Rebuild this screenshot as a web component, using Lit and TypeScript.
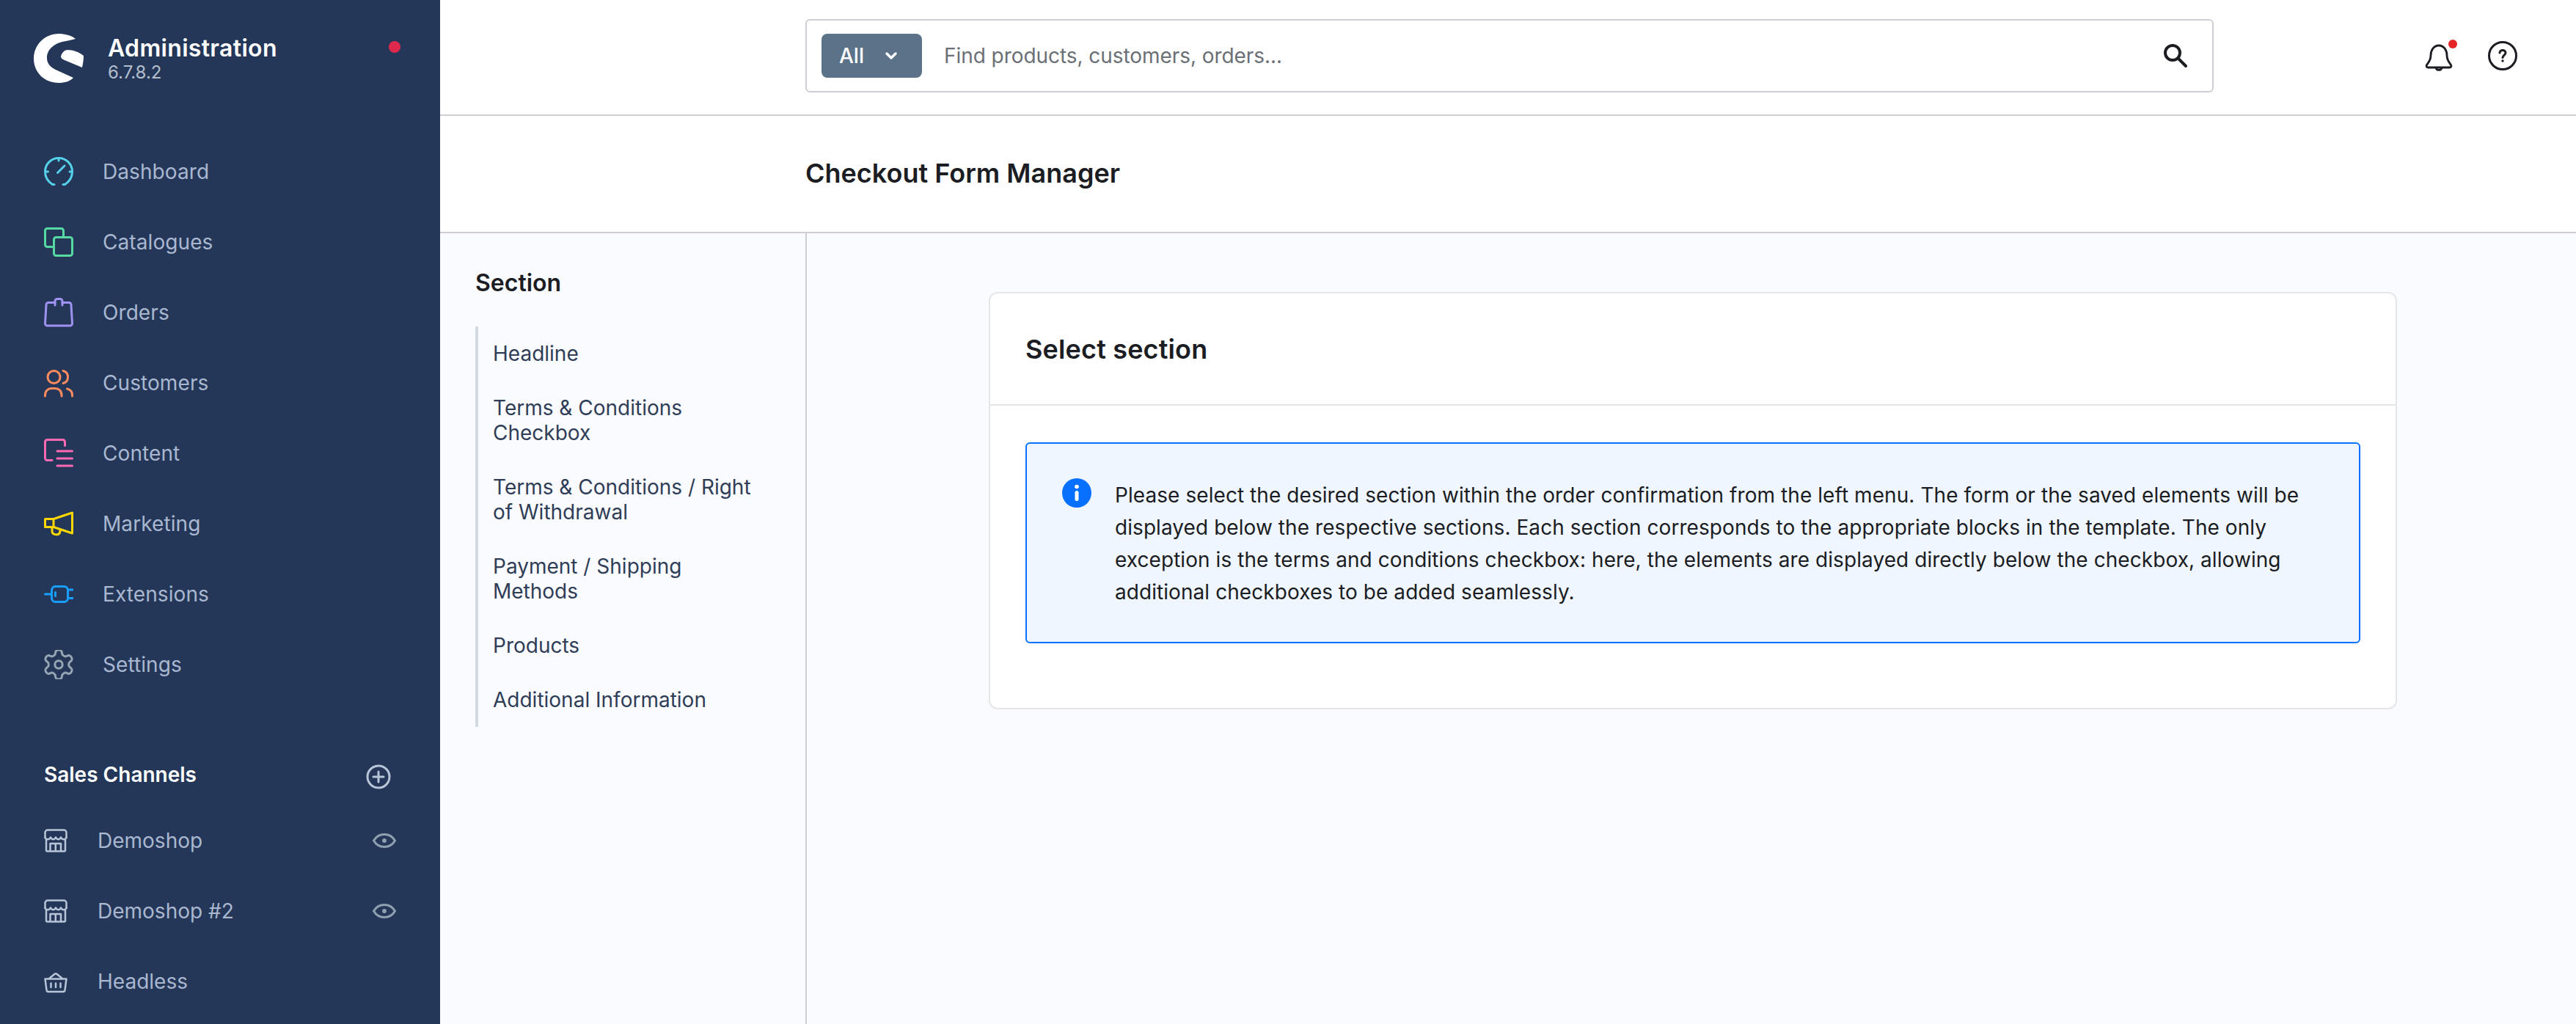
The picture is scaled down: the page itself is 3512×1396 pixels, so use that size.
import { LitElement, html, css, svg } from "lit";
import { customElement } from "lit/decorators.js";

const S = (w: number, h: number, vb: string, body: unknown, stroke: string, sw = 3) => html`<svg
  width=${w} height=${h} viewBox=${vb} fill="none" stroke=${stroke} stroke-width=${sw}
  stroke-linecap="round" stroke-linejoin="round">${body}</svg>`;

const icons = {
  dashboard: S(40, 40, "0 0 40 40", svg`<path d="M14 37.5H11.5C5.5 33.5 1.5 27.5 1.5 20A18.5 18.5 0 0 1 38.5 20C38.5 27.5 34.500 33.500 28.500 37.500H26"/><path d="M20 2V5M3 20H5.500M35 20H37M18.500 21.500L28 12"/>`, "#55d0ea"),
  catalogues: S(40, 40, "0 0 40 40", svg`<path d="M11 26.500H4.500A3 3 0 0 1 1.500 23.500V4.500A3 3 0 0 1 4.500 1.500H23.500A3 3 0 0 1 26.500 4.500V13"/><rect x="13.500" y="13.500" width="25" height="25" rx="3"/>`, "#57d9a3"),
  orders: S(40, 40, "0 0 40 40", svg`<path d="M15 6.500H6A3 3 0 0 0 3 9.500L1.500 35A3 3 0 0 0 4.500 38H35.500A3 3 0 0 0 38.500 35L37 9.500A3 3 0 0 0 34 6.500H25"/><path d="M15 10V4.500A3 3 0 0 1 18 1.500H22A3 3 0 0 1 25 4.500V10"/>`, "#a092f0"),
  customers: S(40, 40, "0 0 40 40", svg`<circle cx="13.500" cy="12" r="8.500"/><path d="M26 3.500C30 4.500 32.500 7.500 32.500 12C32.500 16.500 30 19.500 26 20.500"/><path d="M1.500 38V36.500C1.500 31 5.500 27.500 10 27.500H15C20 27.500 24 31 24 36.500V38"/><path d="M31.500 28C35.500 29 38.500 32 38.500 36.500V38"/>`, "#ff8b5e"),
  content: S(40, 40, "0 0 40 40", svg`<path d="M28.500 9.500V4.500A3 3 0 0 0 25.500 1.500H4.500A3 3 0 0 0 1.500 4.500V26.500A3 3 0 0 0 4.500 29.500H11"/><path d="M18 17H38.500M18 27H38.500M18 37H38.500"/>`, "#ff68b4"),
  marketing: S(40, 40, "0 0 40 40", svg`<path d="M13 13.500L38.500 5V33L13 24.500Z"/><path d="M13 13.500H1.500V24.500H13"/><path d="M11 25V30.500C11 34 15.500 35.500 19 34.500C21 34 22 32 22 29"/>`, "#ffd700"),
  extensions: S(40, 40, "0 0 40 40", svg`<rect x="10.500" y="9.500" width="22" height="21" rx="5"/><path d="M1.500 20H10.500M33 14H39M33 25.500H39M15.500 17.500V22.500"/>`, "#189eff"),
  settings: S(40, 40, "2 2 20 20", svg`<path d="M12.220 2h-.44a2 2 0 0 0-2 2v.18a2 2 0 0 1-1 1.730l-.43.25a2 2 0 0 1-2 0l-.15-.08a2 2 0 0 0-2.730.73l-.22.38a2 2 0 0 0 .73 2.730l.15.1a2 2 0 0 1 1 1.720v.51a2 2 0 0 1-1 1.740l-.15.09a2 2 0 0 0-.73 2.730l.22.38a2 2 0 0 0 2.730.73l.15-.08a2 2 0 0 1 2 0l.43.25a2 2 0 0 1 1 1.730V20a2 2 0 0 0 2 2h.44a2 2 0 0 0 2-2v-.18a2 2 0 0 1 1-1.730l.43-.25a2 2 0 0 1 2 0l.15.08a2 2 0 0 0 2.730-.73l.22-.39a2 2 0 0 0-.73-2.730l-.15-.08a2 2 0 0 1-1-1.740v-.5a2 2 0 0 1 1-1.740l.15-.09a2 2 0 0 0 .73-2.730l-.22-.38a2 2 0 0 0-2.730-.73l-.15.08a2 2 0 0 1-2 0l-.43-.25a2 2 0 0 1-1-1.730V4a2 2 0 0 0-2-2z"/><circle cx="12" cy="12" r="2.600"/>`, "#95a5b3", 1.500),
  store: S(32, 32, "0 0 32 32", svg`<path d="M1.500 12V5A3.500 3.500 0 0 1 5 1.500H27A3.500 3.500 0 0 1 30.500 5V12"/><path d="M1.500 12C3 15 7.500 15 9 11.500C10.500 15 14.500 15 16 11.500C17.500 15 21.500 15 23 11.500C24.500 15 29 15 30.500 12"/><path d="M3 15V29A1.500 1.500 0 0 0 4.500 30.500H27.500A1.500 1.500 0 0 0 29 29V15"/><path d="M8.500 30V20H23V30M15.800 20V30"/>`, "#b8c5d8", 2.500),
  basket: S(32, 32, "0 0 32 32", svg`<path d="M1.500 12.500H30.500L28.500 28A2.500 2.500 0 0 1 26 30H6A2.500 2.500 0 0 1 3.500 28Z"/><path d="M7 12L15 5.500H17L25 12M9.500 18.500V24M16 18.500V24M22.500 18.500V24"/>`, "#b8c5d8", 2.500),
  eye: S(32, 20, "0 0 32 20", svg`<path d="M1.500 10C5 4 10 1.500 16 1.500C22 1.500 27 4 30.500 10C27 16 22 18.500 16 18.500C10 18.500 5 16 1.500 10Z"/><circle cx="16" cy="10" r="2.200" fill="#8fa0b1" stroke-width="1.500"/>`, "#8fa0b1"),
  plus: S(34, 34, "0 0 34 34", svg`<circle cx="17" cy="17" r="15"/><path d="M17 10V24M10 17H24"/>`, "#b8c5d8"),
  search: S(34, 34, "0 0 34 34", svg`<circle cx="13" cy="13" r="10"/><path d="M20.500 20.500L31 31"/>`, "#1b1d23", 4),
  bell: S(38, 38, "0 0 38 38", svg`<path d="M8 15.500C8 8.500 12 2 19 2C26 2 30 8.500 30 15.500C30 22 33 25 35.500 28.500C36.500 30.500 35.500 32 33.500 32H4.500C2.500 32 1.500 30.500 2.500 28.500C5 25 8 22 8 15.500Z"/><path d="M15 32.500A4.200 4.200 0 0 0 23 32.500"/>`, "#1b1d23", 2.800),
  help: S(40, 40, "0 0 40 40", svg`<circle cx="20" cy="20" r="18.500"/><path d="M16 16C16 13.800 17.800 12.500 20 12.500C22.200 12.500 24 13.800 24 16C24 18.800 20.500 19.300 20 22.500" stroke-width="3"/><circle cx="20" cy="27" r="1.700" fill="#1b1d23" stroke="none"/>`, "#1b1d23", 3),
  chevron: S(18, 12, "0 0 18 12", svg`<path d="M3 3L9 9L15 3"/>`, "#ffffff", 3.500),
};

const nav: [string, unknown][] = [
  ["Dashboard", icons.dashboard], ["Catalogues", icons.catalogues], ["Orders", icons.orders],
  ["Customers", icons.customers], ["Content", icons.content], ["Marketing", icons.marketing],
  ["Extensions", icons.extensions], ["Settings", icons.settings],
];
const channels: [string, unknown, boolean][] = [
  ["Demoshop", icons.store, true], ["Demoshop #2", icons.store, true], ["Headless", icons.basket, false],
];
const sections = [
  "Headline", "Terms & Conditions Checkbox", "Terms & Conditions / Right of Withdrawal",
  "Payment / Shipping Methods", "Products", "Additional Information",
];

@customElement("app-root")
export class AppRoot extends LitElement {
  static styles = css`
    :host { display: flex; width: 100%; height: 1396px; overflow: hidden; background: #fff;
      font-family: Inter, "Liberation Sans", sans-serif; font-size: 28px; color: #1b1d23; }
    svg { display: block; flex: none; }
    .side { width: 600px; flex: none; background: #243758; color: #a9b8d0; height: 100%; overflow: hidden; }
    .brand { height: 186px; box-sizing: border-box; padding: 46px 46px 0; display: flex; align-items: flex-start; gap: 33px; }
    .brand-text { flex: 1; padding-top: 2px; }
    .brand-name { font-size: 32px; font-weight: 600; letter-spacing: 0.32px; line-height: 36px; color: #fff; }
    .brand-ver { font-size: 24px; line-height: 30px; margin-top: 0; color: #b3bfcc; }
    .dot { width: 16px; height: 16px; border-radius: 50%; background: #de294c; margin: 10px 8px 0 0; }
    .nav-item { height: 96px; display: flex; align-items: center; padding-left: 60px; gap: 40px; letter-spacing: 0.08px; }
    .sc-head { margin-top: 57px; height: 87px; box-sizing: border-box; padding: 2px 67px 0 60px; display: flex; align-items: center; justify-content: space-between;
      color: #fff; font-weight: 600; font-size: 28px; }
    .sc-head svg { margin-top: 6px; }
    .sc-item { height: 96px; display: flex; align-items: center; padding: 0 60px; gap: 41px; }
    .sc-item span { flex: 1; }
    .main { flex: 1; min-width: 0; display: flex; flex-direction: column; }
    .top { height: 158px; box-sizing: border-box; border-bottom: 2px solid #cdced6; display: flex; align-items: flex-start; padding: 26px 0 0 498px; }
    .search { width: 1920px; height: 100px; box-sizing: border-box; border: 2px solid #cdced6; border-radius: 6px; display: flex; align-items: center; padding: 0 33px 0 20px; }
    .all { width: 137px; height: 60px; box-sizing: border-box; border-radius: 8px; background: #5c7289; color: #fff; font-weight: 500; display: flex; align-items: center; padding-left: 24px; gap: 28px; }
    .ph { flex: 1; margin-left: 30px; color: #6b6f76; letter-spacing: -0.06px; }
    .actions { display: flex; align-items: flex-start; padding: 30px 0 0 0; margin-left: 288px; gap: 48px; }
    .bell { position: relative; padding-top: 4px; }
    .bell i { position: absolute; right: -6px; top: -2px; width: 12px; height: 12px; border-radius: 50%; background: #e62626; }
    .head { height: 160px; box-sizing: border-box; border-bottom: 2px solid #cdced6; padding: 0 0 2px 498px; display: flex; align-items: center; }
    .head h1 { margin: 0; font-size: 36px; font-weight: 600; color: #1b1d23; }
    .body { flex: 1; display: flex; background: #fafbfe; min-height: 0; }
    .menu { width: 500px; flex: none; box-sizing: border-box; border-right: 2px solid #cdced6; padding: 0 48px; }
    .menu h2 { margin: 48px 0 0; font-size: 32px; line-height: 40px; font-weight: 600; color: #1b1d23; }
    .rail { margin-top: 39px; border-left: 4px solid #d4dae0; padding-left: 20px; }
    .rail div { padding: 20px 0; line-height: 34px; color: #2f3d57; }
    .content { flex: 1; padding: 80px 0 0 248px; }
    .card { width: 1920px; box-sizing: border-box; background: #fff; border: 2px solid #e5e6ea; border-radius: 12px; padding-bottom: 88px; }
    .card-head { height: 153px; box-sizing: border-box; border-bottom: 2px solid #e5e6ea; padding-left: 48px; display: flex; align-items: center; }
    .card-head h3 { margin: 0; font-size: 36px; font-weight: 600; letter-spacing: 0.15px; color: #1b1d23; }
    .alert { margin: 50px 48px 0; box-sizing: border-box; border: 2px solid #0870ff; border-radius: 6px; background: #eff6ff; padding: 48px 70px 46px 48px; display: flex; gap: 32px; line-height: 44px; letter-spacing: 0.065px; color: #1b1d23; }
    .info { margin-top: -1px; }
  `;

  render() {
    return html`
      <aside class="side">
        <div class="brand">
          <svg width="68" height="68" viewBox="46 46 68 68" fill="#fff">
            <path d="M103 53C97 48 88 46 80 46C61 46 46 61 46 80C46 99 61 113 80 113C88 113 95 111 100 106L78 96C69 92 64 87 64 79C64 66 76 58 90 56C95 55 99 54 103 53Z" />
            <path d="M83 77C84 72 88 68 92 68C100 68 108 71 114 76C114 82 113 87 112 92L88 82C85 81 83 79 83 77Z" />
          </svg>
          <div class="brand-text">
            <div class="brand-name">Administration</div>
            <div class="brand-ver">6.7.8.2</div>
          </div>
          <div class="dot"></div>
        </div>
        ${nav.map(([t, i]) => html`<div class="nav-item">${i}<span>${t}</span></div>`)}
        <div class="sc-head"><span>Sales Channels</span>${icons.plus}</div>
        ${channels.map(([t, i, e]) => html`<div class="sc-item">${i}<span>${t}</span>${e ? icons.eye : ""}</div>`)}
      </aside>
      <div class="main">
        <div class="top">
          <div class="search">
            <div class="all"><span>All</span>${icons.chevron}</div>
            <div class="ph">Find products, customers, orders...</div>
            ${icons.search}
          </div>
          <div class="actions">
            <div class="bell">${icons.bell}<i></i></div>
            ${icons.help}
          </div>
        </div>
        <div class="head"><h1>Checkout Form Manager</h1></div>
        <div class="body">
          <div class="menu">
            <h2>Section</h2>
            <div class="rail">${sections.map((s) => html`<div>${s}</div>`)}</div>
          </div>
          <div class="content">
            <div class="card">
              <div class="card-head"><h3>Select section</h3></div>
              <div class="alert">
                <svg class="info" width="40" height="40" viewBox="0 0 40 40">
                  <circle cx="20" cy="20" r="20" fill="#0870ff" />
                  <circle cx="20" cy="11.500" r="2.800" fill="#fff" />
                  <rect x="17.500" y="17" width="5" height="14" rx="2.500" fill="#fff" />
                </svg>
                <div>Please select the desired section within the order confirmation from the left menu. The form or the saved elements will be displayed below the respective sections. Each section corresponds to the appropriate blocks in the template. The only exception is the terms and conditions checkbox: here, the elements are displayed directly below the checkbox, allowing additional checkboxes to be added seamlessly.</div>
              </div>
            </div>
          </div>
        </div>
      </div>
    `;
  }
}
